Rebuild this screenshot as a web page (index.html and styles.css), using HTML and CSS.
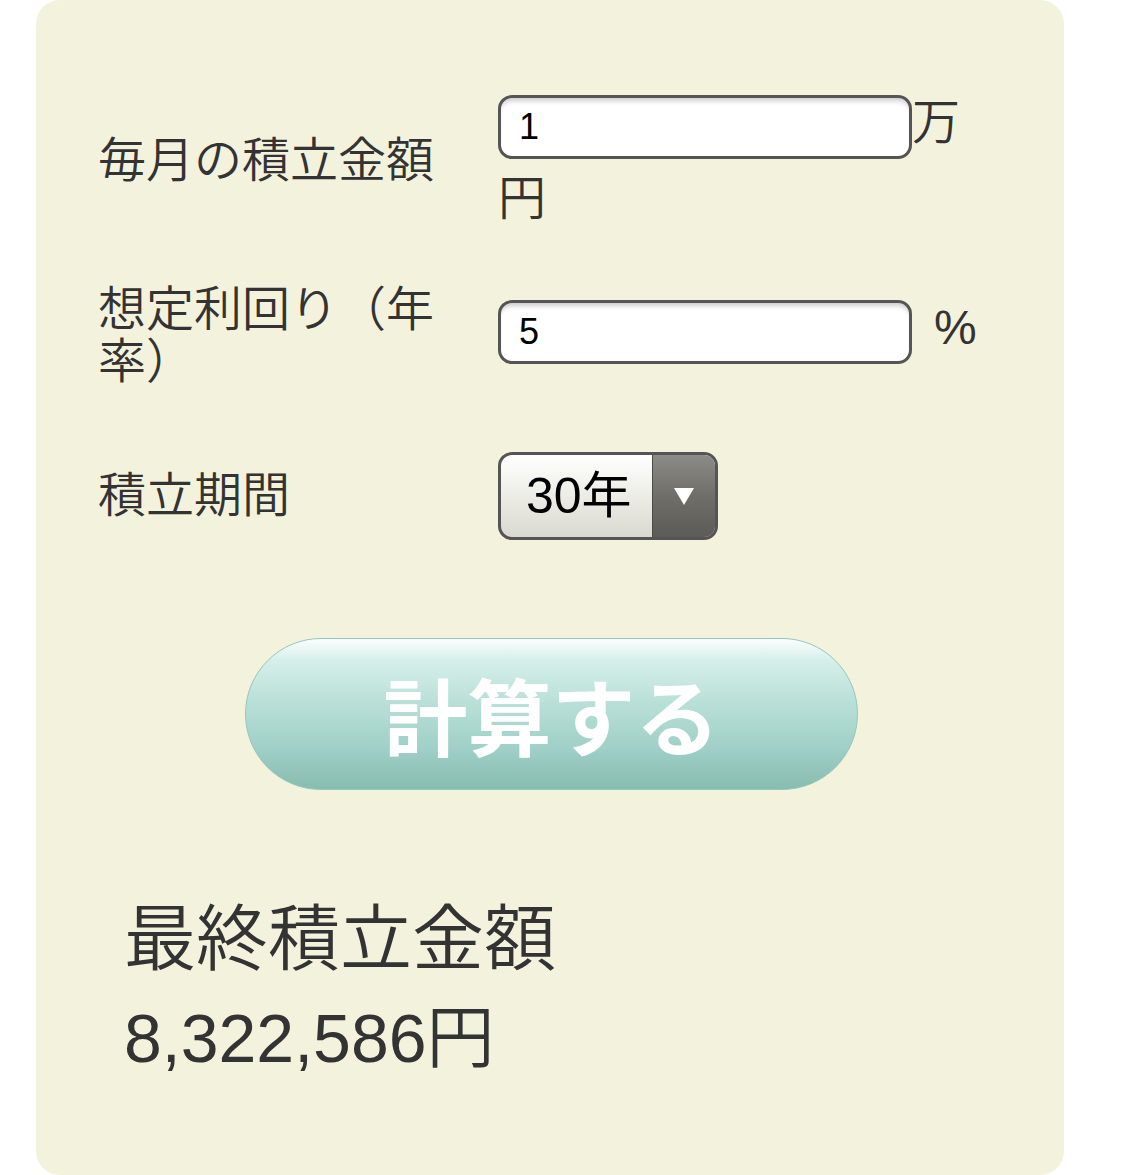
FILE: index.html
```html
<!DOCTYPE html>
<html lang="ja">
<head>
  <meta charset="UTF-8" />
  <meta name="viewport" content="width=device-width, initial-scale=1.0"/>
  <title>積立シミュレーション</title>
  <link rel="stylesheet" href="styles.css">
</head>
<body>
  <div class="panel">
    <div class="form-row row-amount">
      <label class="label" for="monthly">毎月の積立金額</label>
      <div class="field"><input type="text" id="monthly" class="text-input" value="1">万円</div>
    </div>

    <div class="form-row row-rate">
      <label class="label" for="rate">想定利回り（年率）</label>
      <div class="field"><input type="text" id="rate" class="text-input" value="5"><span class="unit-pct">%</span></div>
    </div>

    <div class="form-row row-period">
      <label class="label" for="years">積立期間</label>
      <div class="field">
        <div class="select-wrap">
          <select id="years" class="select">
            <option>10年</option>
            <option>20年</option>
            <option selected>30年</option>
          </select>
          <span class="select-arrow">
            <svg width="20" height="17" viewBox="0 0 20 17"><path d="M0 0 H20 L10 17 Z" fill="#fff"/></svg>
          </span>
        </div>
      </div>
    </div>

    <button class="calc-btn" onclick="calculate()">計算する</button>

    <div class="result">
      <h2 class="result-title">最終積立金額</h2>
      <p class="result-value" id="result">8,322,586円</p>
    </div>
  </div>

  <script>
    function calculate() {
      const monthly = (parseFloat(document.getElementById('monthly').value) || 0) * 10000;
      const rate = (parseFloat(document.getElementById('rate').value) || 0) / 100 / 12;
      const years = parseInt(document.getElementById('years').value, 10) || 0;
      const months = years * 12;

      let total = 0;
      for (let i = 0; i < months; i++) {
        total = (total + monthly) * (1 + rate);
      }

      document.getElementById('result').textContent = Math.round(total).toLocaleString('ja-JP') + '円';
    }
  </script>
</body>
</html>
```

FILE: styles.css
```css
body {
  margin: 0;
  background: #fff;
  color: #333;
  font-family: "Liberation Sans", "Noto Sans CJK JP", sans-serif;
}
.panel {
  margin-left: 36px;
  width: 1028px;
  min-height: 1175px;
  box-sizing: border-box;
  padding: 85px 0 0 62px;
  background: #f3f2dc;
  border-radius: 24px;
}
.form-row {
  display: flex;
  align-items: center;
}
.row-rate {
  margin-top: 31px;
}
.row-rate .label {
  padding-top: 16px;
}
.row-period {
  margin-top: 64px;
}
.label {
  width: 400px;
  padding-right: 30px;
  box-sizing: border-box;
  font-size: 48px;
  font-weight: 350;
  line-height: 52px;
}
.field {
  width: 490px;
  font-size: 48px;
  font-weight: 350;
  line-height: 76px;
}
.text-input {
  width: 414px;
  height: 64px;
  box-sizing: border-box;
  padding: 0 18px;
  margin: 0;
  border: 3px solid #555;
  border-radius: 14px;
  background: #fff;
  box-shadow: inset 0 6px 5px -3px rgba(0,0,0,0.2);
  font-family: "Liberation Sans", sans-serif;
  font-size: 36px;
  color: #000;
  outline: none;
}
.unit-pct {
  margin-left: 22px;
}
.select-wrap {
  position: relative;
  width: 220px;
  height: 88px;
}
.select {
  -webkit-appearance: none;
  appearance: none;
  display: block;
  width: 220px;
  height: 88px;
  box-sizing: border-box;
  margin: 0;
  padding: 0 0 0 25px;
  border: 3px solid #555;
  border-radius: 14px;
  background: linear-gradient(#ffffff, #ededE6 50%, #d9d9d1);
  font-family: "Liberation Sans", "Noto Sans CJK JP", sans-serif;
  font-size: 50px;
  color: #000;
  outline: none;
}
.select-arrow {
  position: absolute;
  top: 3px;
  right: 3px;
  bottom: 3px;
  width: 62px;
  display: flex;
  align-items: center;
  justify-content: center;
  border-left: 1px solid #4a4a46;
  border-radius: 0 11px 11px 0;
  background: linear-gradient(#8c8b85, #6f6e68 50%, #5c5b56);
  pointer-events: none;
}
.calc-btn {
  display: block;
  width: 613px;
  height: 152px;
  margin: 98px 0 0 147px;
  padding: 0;
  border: 1px solid #93c8be;
  border-radius: 76px;
  background: linear-gradient(#fbfefd 0%, #d6efea 14%, #b9e0d8 42%, #a0d0c7 72%, #88bcb1 100%);
  color: #fff;
  font-family: "Noto Sans CJK JP", sans-serif;
  font-weight: bold;
  font-size: 84px;
  line-height: 1;
  cursor: pointer;
}
.result {
  margin-top: 109px;
  padding-left: 26px;
}
.result-title {
  margin: 0;
  font-size: 72px;
  font-weight: 350;
  line-height: 80px;
}
.result-value {
  margin: 19px 0 0;
  font-size: 68px;
  font-weight: 350;
  line-height: 80px;
}
```
